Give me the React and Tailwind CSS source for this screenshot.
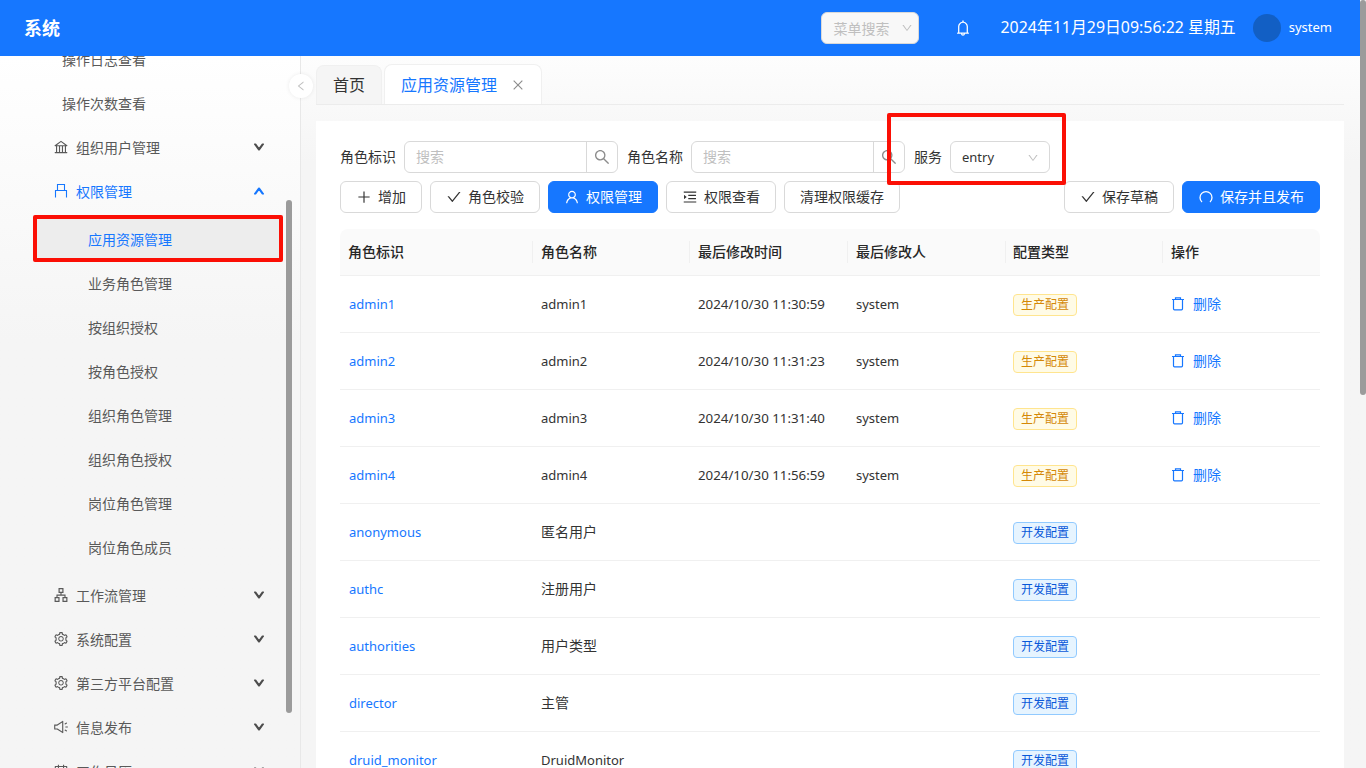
import React from "react";
import {
  AiOutlineApartment,
  AiOutlineBank,
  AiOutlineBell,
  AiOutlineCalendar,
  AiOutlineCheck,
  AiOutlineClose,
  AiOutlineDown,
  AiOutlineLeft,
  AiOutlineMenuUnfold,
  AiOutlinePlus,
  AiOutlineSearch,
  AiOutlineSetting,
  AiOutlineSound,
  AiOutlineUp,
  AiOutlineUser,
} from "react-icons/ai";

const font = "font-['Noto_Sans','Noto_Sans_CJK_SC',sans-serif]";

function PermIcon() {
  return (
    <svg width="16" height="16" viewBox="0 0 16 16" fill="none" stroke="currentColor" strokeWidth="1.1">
      <path d="M4.5 7.5V1.5h7v6" />
      <path d="M2.5 14.5v-7h11v7" />
    </svg>
  );
}

function SyncIcon() {
  return (
    <svg width="16" height="16" viewBox="0 0 16 16" fill="none" stroke="currentColor" strokeWidth="1.3">
      <path d="M4 13a6 6 0 1 1 8 0" />
    </svg>
  );
}

function TrashIcon() {
  return (
    <svg width="14" height="14" viewBox="0 0 14 14" fill="none" stroke="currentColor" strokeWidth="1.2" className="mt-[2px] shrink-0">
      <path d="M1 2.5h12M4.5 2.5V0.8h5v1.7" />
      <path d="M2.5 2.5v9.3a1 1 0 0 0 1 1h7a1 1 0 0 0 1-1V2.5" />
    </svg>
  );
}

const menuTop = ["操作日志查看", "操作次数查看"];

const children = [
  "业务角色管理",
  "按组织授权",
  "按角色授权",
  "组织角色管理",
  "组织角色授权",
  "岗位角色管理",
  "岗位角色成员",
];

const groupsBelow = [
  { label: "工作流管理", icon: AiOutlineApartment },
  { label: "系统配置", icon: AiOutlineSetting },
  { label: "第三方平台配置", icon: AiOutlineSetting },
  { label: "信息发布", icon: AiOutlineSound },
  { label: "工作日历", icon: AiOutlineCalendar },
];

const rows = [
  ["admin1", "admin1", "2024/10/30 11:30:59", "system", "prod"],
  ["admin2", "admin2", "2024/10/30 11:31:23", "system", "prod"],
  ["admin3", "admin3", "2024/10/30 11:31:40", "system", "prod"],
  ["admin4", "admin4", "2024/10/30 11:56:59", "system", "prod"],
  ["anonymous", "匿名用户", "", "", "dev"],
  ["authc", "注册用户", "", "", "dev"],
  ["authorities", "用户类型", "", "", "dev"],
  ["director", "主管", "", "", "dev"],
  ["druid_monitor", "DruidMonitor", "", "", "dev"],
];

function MenuGroup({ label, Icon, open }) {
  return (
    <div className={`flex h-11 items-center pl-[53px] pr-[21px] ${open ? "text-[#1677ff]" : "text-[#595959]"}`}>
      <span className="flex w-[23px] shrink-0 items-center text-[16px]">
        <Icon />
      </span>
      <span className="flex-1">{label}</span>
      {open ? (
        <AiOutlineUp className="text-[12px] stroke-[100]" />
      ) : (
        <AiOutlineDown className="text-[12px] stroke-[100] text-[#4d4d4d]" />
      )}
    </div>
  );
}

function Sidebar() {
  return (
    <div className="relative flex w-[301px] shrink-0 overflow-hidden border-r border-[#e8e8e8] bg-gradient-to-b from-white to-[#f5f5f5] to-[40%]">
      <nav className="-mt-[19px] w-[286px] shrink-0 text-[14px]">
        {menuTop.map((m) => (
          <div key={m} className="flex h-11 items-center pl-[62px] text-[#595959]">
            {m}
          </div>
        ))}
        <MenuGroup label="组织用户管理" Icon={AiOutlineBank} />
        <MenuGroup label="权限管理" Icon={PermIcon} open />
        <div className="relative ml-[37px] mt-[3px] flex h-[45px] w-[242px] items-center bg-[#ededed] pl-[51px] pt-px text-[#1677ff]">
          应用资源管理
          <div className="absolute -inset-x-[4px] -inset-y-[1px] rounded-[2px] border-4 border-[#fb0f05]" />
        </div>
        {children.map((c) => (
          <div key={c} className="flex h-11 items-center pl-[88px] text-[#595959]">
            {c}
          </div>
        ))}
        <div className="h-[4px]" />
        {groupsBelow.map((g) => (
          <MenuGroup key={g.label} label={g.label} Icon={g.icon} />
        ))}
      </nav>
      <div className="w-[6px] shrink-0 pt-[144px]">
        <div className="h-[513px] rounded-[3px] bg-[#9b9b9b]" />
      </div>
    </div>
  );
}

function Header() {
  return (
    <header className="flex h-14 shrink-0 items-center bg-[#1677ff] pl-6 pr-7 text-white">
      <span className="text-[18px] font-bold">系统</span>
      <div className="ml-auto flex h-8 w-[98px] items-center justify-between rounded-md border border-[#d9d9d9] bg-[#f8f8f8] pl-[11px] pr-[5px] text-[14px] text-[#bfbfbf]">
        菜单搜索
        <AiOutlineDown className="text-[12px]" />
      </div>
      <AiOutlineBell className="ml-[35px] text-[18px]" />
      <span className="ml-[28px] text-[15.9px]">2024年11月29日09:56:22 星期五</span>
      <span className="ml-[17px] h-7 w-7 rounded-full bg-[#125fc4]" />
      <span className="ml-2 text-[13px]">system</span>
    </header>
  );
}

function SearchBox({ label }) {
  return (
    <div className="flex items-center">
      <span className="pb-px text-[#333]">{label}</span>
      <div className="ml-2 flex h-8 w-[214px] rounded-md border border-[#d9d9d9]">
        <span className="flex-1 pl-[11px] leading-[30px] text-[#bfbfbf]">搜索</span>
        <span className="flex w-[31px] items-center justify-center border-l border-[#d9d9d9] text-[18px] text-[#8c8c8c]">
          <AiOutlineSearch />
        </span>
      </div>
    </div>
  );
}

function Btn({ icon, children, primary, w }) {
  return (
    <button
      className={`flex h-8 items-center justify-center gap-[6px] rounded-md border pb-px ${w} ${
        primary ? "border-[#1677ff] bg-[#1677ff] text-white" : "border-[#d9d9d9] bg-white text-[#333]"
      }`}
    >
      {icon}
      {children}
    </button>
  );
}

function Tag({ kind }) {
  return kind === "prod" ? (
    <span className="inline-flex h-[22px] w-16 items-center justify-center rounded border border-[#ffe58f] bg-[#fffbe6] align-middle text-[12px] text-[#d48806]">
      生产配置
    </span>
  ) : (
    <span className="inline-flex h-[22px] w-16 items-center justify-center rounded border border-[#91caff] bg-[#e6f4ff] align-middle text-[12px] text-[#0958d9]">
      开发配置
    </span>
  );
}

function RolesTable() {
  const heads = ["角色标识", "角色名称", "最后修改时间", "最后修改人", "配置类型", "操作"];
  return (
    <table className="mt-4 w-[980px] table-fixed border-collapse text-[13px]">
      <colgroup>
        <col className="w-[192px]" />
        <col className="w-[157px]" />
        <col className="w-[158px]" />
        <col className="w-[158px]" />
        <col className="w-[157px]" />
        <col className="w-[158px]" />
      </colgroup>
      <thead>
        <tr className="h-[46px] border-b border-[#f0f0f0] bg-[#fafafa] text-left text-[14px] text-[#262626]">
          {heads.map((h, i) => (
            <th
              key={h}
              className={`relative font-medium ${i === 4 || i === 0 ? "pl-2" : "pl-[9px]"} ${i === 0 ? "rounded-tl-lg" : ""} ${i === 5 ? "rounded-tr-lg" : ""}`}
            >
              {i > 0 && <span className="absolute left-0 top-[12px] h-[22px] w-px bg-[#f0f0f0]" />}
              {h}
            </th>
          ))}
        </tr>
      </thead>
      <tbody>
        {rows.map((r) => (
          <tr key={r[0]} className="h-[57px] border-b border-[#f0f0f0] text-[#333]">
            <td className="pl-[9px] pt-[3px] text-[#1677ff]">{r[0]}</td>
            <td className={`pl-[9px] ${/^[a-zA-Z]/.test(r[1]) ? "pt-[3px]" : "pb-px text-[14px]"}`}>{r[1]}</td>
            <td className="pl-[9px] pt-[3px] text-[13.3px]">{r[2]}</td>
            <td className="pl-[9px] pt-[3px]">{r[3]}</td>
            <td className="pl-2 pt-[3px]">
              <Tag kind={r[4]} />
            </td>
            <td className="pb-px pl-[9px] text-[14px] text-[#1677ff]">
              {r[4] === "prod" && (
                <span className="flex items-center gap-2">
                  <TrashIcon />
                  删除
                </span>
              )}
            </td>
          </tr>
        ))}
      </tbody>
    </table>
  );
}

function Main() {
  return (
    <main className="relative flex-1 overflow-hidden bg-gradient-to-b from-[#fdfdfd] to-[#f5f5f5] to-[15%] pl-[15px] pr-4 text-[14px]">
      <div className="flex h-[49px] items-end gap-[2px] border-b border-[#ececec] pt-[9px]">
        <div className="flex h-[39px] w-[66px] items-center justify-center rounded-t-lg border border-b-0 border-[#f0f0f0] bg-[#f5f5f5] text-[16px] text-[#333]">
          首页
        </div>
        <div className="flex h-10 w-[158px] items-center gap-[14px] rounded-t-lg border border-b-0 border-[#f0f0f0] bg-white pl-4 text-[16px] text-[#1677ff]">
          应用资源管理
          <AiOutlineClose className="text-[14px] text-[#8c8c8c]" />
        </div>
      </div>
      <section className="mt-4 bg-white px-6 pt-5">
        <div className="relative flex items-center gap-[9px]">
          <SearchBox label="角色标识" />
          <SearchBox label="角色名称" />
          <div className="flex items-center">
            <span className="pb-px text-[#333]">服务</span>
            <div className="ml-2 flex h-8 w-[100px] items-center justify-between rounded-md border border-[#d9d9d9] pl-[11px] pr-[10px] pt-px text-[13px] text-[#333]">
              entry
              <AiOutlineDown className="text-[12px] text-[#bfbfbf]" />
            </div>
          </div>
          <div className="absolute left-[547px] -top-[28px] h-[72px] w-[179px] rounded-[2px] border-4 border-[#fb0f05]" />
        </div>
        <div className="mt-2 flex gap-2">
          <Btn w="w-[82px]" icon={<AiOutlinePlus className="text-[16px]" />}>增加</Btn>
          <Btn w="w-[110px]" icon={<AiOutlineCheck className="text-[16px]" />}>角色校验</Btn>
          <Btn w="w-[110px]" primary icon={<AiOutlineUser className="text-[16px]" />}>权限管理</Btn>
          <Btn w="w-[110px]" icon={<AiOutlineMenuUnfold className="text-[16px]" />}>权限查看</Btn>
          <Btn w="w-[116px]">清理权限缓存</Btn>
          <div className="ml-auto flex gap-2">
            <Btn w="w-[110px]" icon={<AiOutlineCheck className="text-[16px]" />}>保存草稿</Btn>
            <Btn w="w-[138px]" primary icon={<SyncIcon />}>保存并且发布</Btn>
          </div>
        </div>
        <RolesTable />
      </section>
    </main>
  );
}

export default function App() {
  return (
    <div className={`flex h-screen w-full overflow-hidden bg-white ${font}`}>
      <div className="flex min-w-0 flex-1 flex-col">
        <Header />
        <div className="relative flex min-h-0 flex-1">
          <Sidebar />
          <Main />
          <button className="absolute left-[289px] top-[18px] flex h-6 w-6 items-center justify-center rounded-full bg-white text-[12px] text-[#bfbfbf] shadow-[0_0_4px_rgba(0,0,0,0.08)]">
            <AiOutlineLeft />
          </button>
        </div>
      </div>
      <div className="w-[6px] shrink-0 bg-[#f5f5f5]">
        <div className="h-[395px] rounded-[3px] bg-[#9b9b9b]" />
      </div>
    </div>
  );
}
